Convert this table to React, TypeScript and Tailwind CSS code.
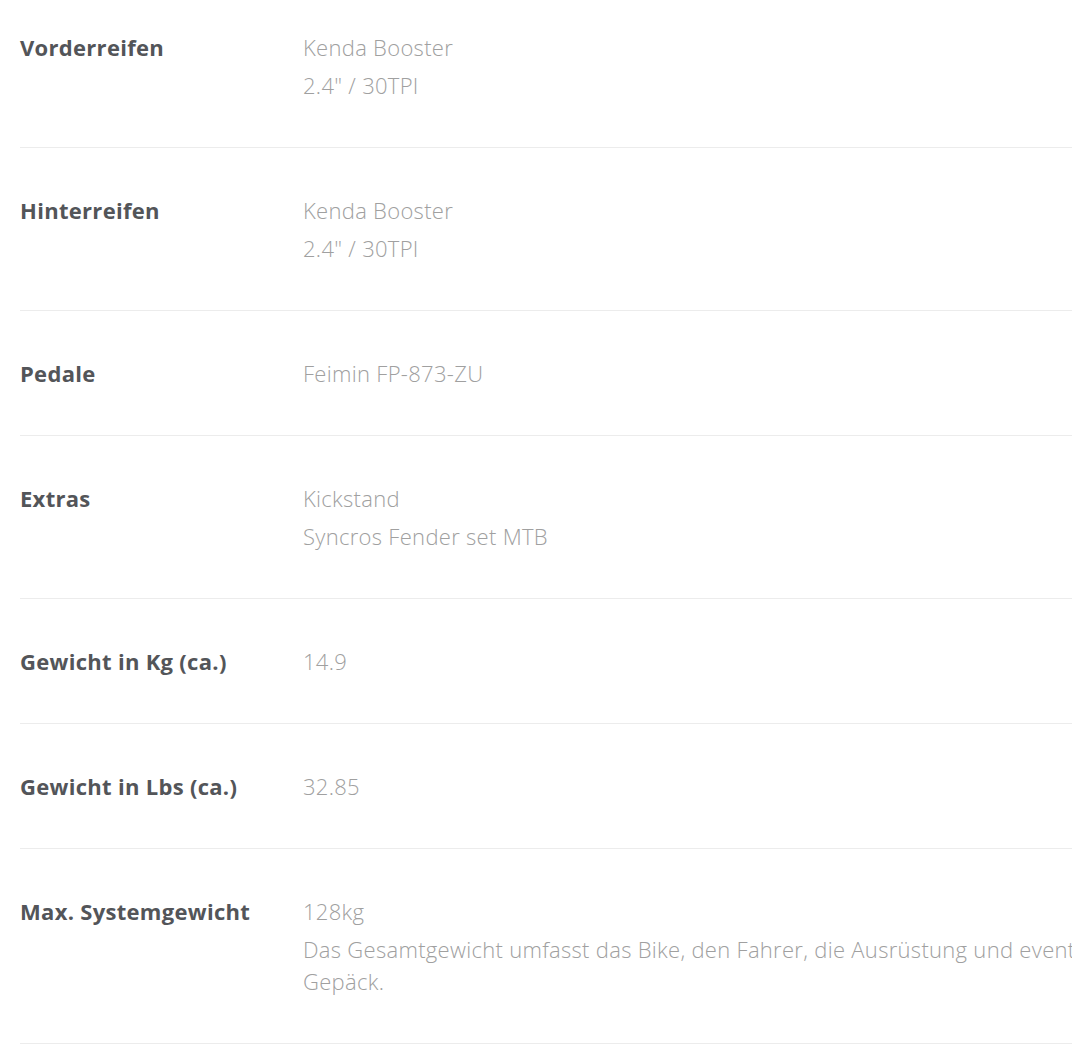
import React from "react";

interface SpecRow {
  label: string;
  values: string[];
}

const specs: SpecRow[] = [
  { label: "Vorderreifen", values: ["Kenda Booster", "2.4\" / 30TPI"] },
  { label: "Hinterreifen", values: ["Kenda Booster", "2.4\" / 30TPI"] },
  { label: "Pedale", values: ["Feimin FP-873-ZU"] },
  { label: "Extras", values: ["Kickstand", "Syncros Fender set MTB"] },
  { label: "Gewicht in Kg (ca.)", values: ["14.9"] },
  { label: "Gewicht in Lbs (ca.)", values: ["32.85"] },
  {
    label: "Max. Systemgewicht",
    values: [
      "128kg",
      "Das Gesamtgewicht umfasst das Bike, den Fahrer, die Ausrüstung und eventuelles Gepäck.",
    ],
  },
];

const App: React.FC = () => {
  return (
    <div className="w-full h-[1055px] overflow-hidden bg-white font-['Open_Sans',sans-serif]">
      <div className="w-[1180px] pl-5">
        {specs.map((row, i) => (
          <div
            key={row.label}
            className={`flex border-b border-[#ececec] ${i === 0 ? "pt-[31px]" : "pt-[46px]"} pb-[46px]`}
          >
            <div className="w-[283px] shrink-0 text-[22px] leading-[32px] tracking-[0.3px] font-bold text-[#535559]">
              {row.label}
            </div>
            <div className="w-[850px] flex flex-col gap-[6px]">
              {row.values.map((v) => (
                <p
                  key={v}
                  className="text-[22px] leading-[32px] tracking-[0.3px] font-light text-[#a0a0a0]"
                >
                  {v}
                </p>
              ))}
            </div>
          </div>
        ))}
      </div>
    </div>
  );
};

export default App;
